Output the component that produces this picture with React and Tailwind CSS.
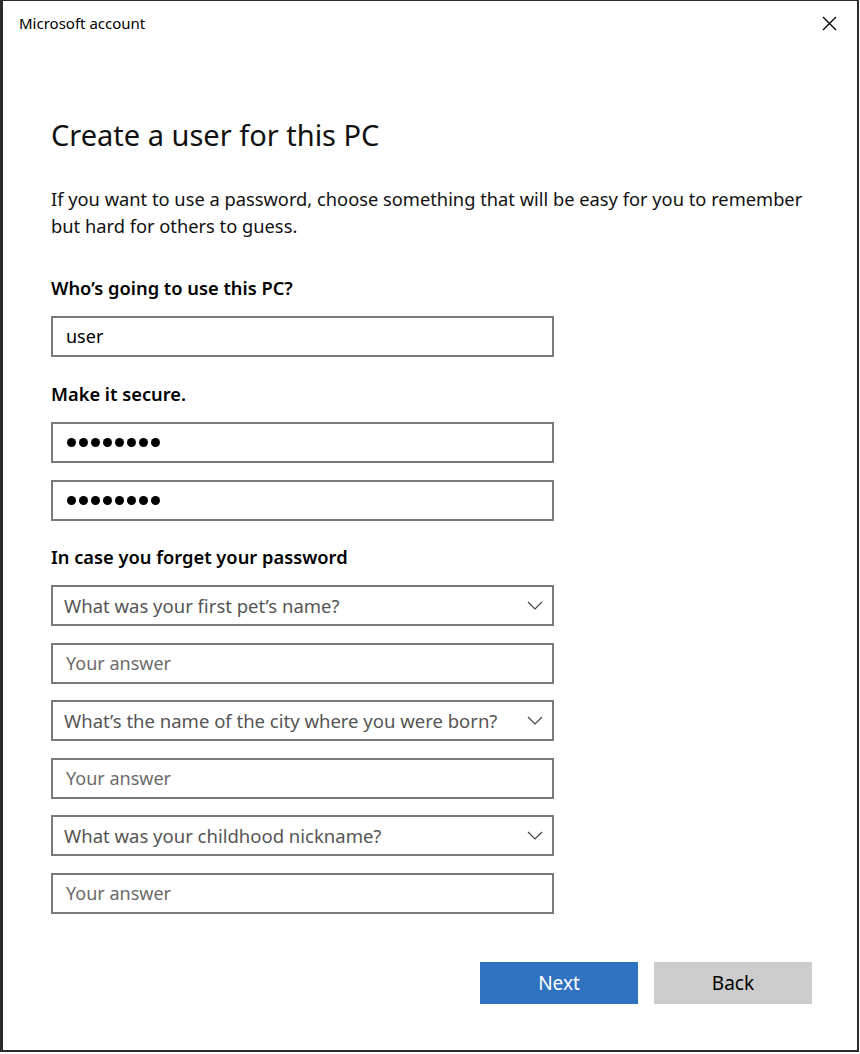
const font = { fontFamily: '"Noto Sans", "Open Sans", sans-serif' };

function TextBox({ children, muted }) {
  return (
    <div
      className={`flex h-[41px] w-[503px] items-center border-2 border-[#7a7a7a] bg-white pl-[13px] text-[18px] ${
        muted ? "text-[#6b6b6b]" : "text-black"
      }`}
    >
      {children}
    </div>
  );
}

function Dots() {
  return (
    <div className="ml-[1px] flex gap-[3px]">
      {Array.from({ length: 8 }).map((_, i) => (
        <span key={i} className="h-[9px] w-[9px] rounded-full bg-black" />
      ))}
    </div>
  );
}

function Select({ label }) {
  return (
    <div className="flex h-[41px] w-[503px] items-center justify-between border-2 border-[#7a7a7a] bg-white pl-[11px] pr-[9px] text-[18.5px] text-[#555]">
      <span>{label}</span>
      <svg width="16" height="9" viewBox="0 0 16 9" className="text-[#444]">
        <path d="M1 1 L8 8 L15 1" fill="none" stroke="currentColor" strokeWidth="1.2" />
      </svg>
    </div>
  );
}

export default function App() {
  return (
    <div className="h-[1054px] w-[860px] bg-white" style={font}>
      <div className="h-[1052px] w-[859px] border-b-2 border-l-[3px] border-r-2 border-t border-[#2b2b2b] bg-white">
        <div className="flex h-[44px] items-center justify-between pl-[16px] pr-[20px]">
          <span className="text-[15px] text-black">Microsoft account</span>
          <svg width="15" height="15" viewBox="0 0 15 15" className="text-black">
            <path d="M1 1 L14 14 M14 1 L1 14" stroke="currentColor" strokeWidth="1.3" />
          </svg>
        </div>

        <div className="pl-[48px]">
          <h1 className="mt-[70px] text-[29px] leading-[40px] text-[#111]">Create a user for this PC</h1>
          <p className="mt-[30px] w-[780px] text-[18.3px] leading-[27px] text-[#111]">
            If you want to use a password, choose something that will be easy for you to remember but hard for others to guess.
          </p>

          <div className="mt-[35px] text-[18.3px] font-semibold leading-[27px] text-black">Who’s going to use this PC?</div>
          <div className="mt-[15px]">
            <TextBox>user</TextBox>
          </div>

          <div className="mt-[23px] text-[18.3px] font-semibold leading-[27px] text-black">Make it secure.</div>
          <div className="mt-[15px] flex flex-col gap-[17px]">
            <TextBox>
              <Dots />
            </TextBox>
            <TextBox>
              <Dots />
            </TextBox>
          </div>

          <div className="mt-[22px] text-[18.3px] font-semibold leading-[27px] text-black">In case you forget your password</div>
          <div className="mt-[15px] flex flex-col gap-[16.6px]">
            <Select label="What was your first pet’s name?" />
            <TextBox muted>Your answer</TextBox>
            <Select label="What’s the name of the city where you were born?" />
            <TextBox muted>Your answer</TextBox>
            <Select label="What was your childhood nickname?" />
            <TextBox muted>Your answer</TextBox>
          </div>

          <div className="mt-[48px] flex justify-end gap-[16px] pr-[45px]">
            <button className="h-[42px] w-[158px] bg-[#2f72c0] text-[19px] text-white">Next</button>
            <button className="h-[42px] w-[158px] border-2 border-[#cccccc] bg-[#cccccc] text-[19px] text-black">Back</button>
          </div>
        </div>
      </div>
    </div>
  );
}
